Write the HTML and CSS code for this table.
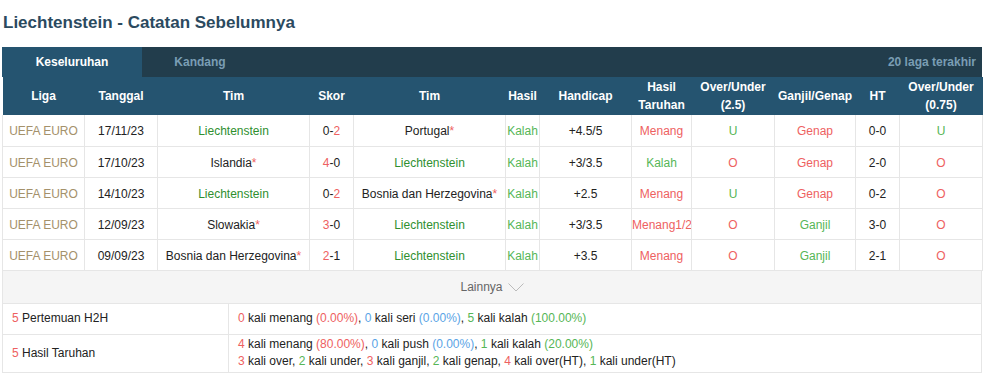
FILE: index.html
```html
<!DOCTYPE html>
<html lang="id">
<head>
<meta charset="utf-8">
<title>Liechtenstein - Catatan Sebelumnya</title>
<link rel="stylesheet" href="styles.css">
</head>
<body>
<div class="wrap">
  <h2 class="title">Liechtenstein - Catatan Sebelumnya</h2>
  <div class="tabs">
    <div class="tab active">Keseluruhan</div>
    <div class="tab">Kandang</div>
    <div class="tab-note">20 laga terakhir</div>
  </div>
  <table class="rec">
    <colgroup>
      <col style="width:82px"><col style="width:73px"><col style="width:152px"><col style="width:44px"><col style="width:152px"><col style="width:34px"><col style="width:92px"><col style="width:60px"><col style="width:83px"><col style="width:81px"><col style="width:44px"><col style="width:83px">
    </colgroup>
    <thead>
      <tr>
        <th>Liga</th><th>Tanggal</th><th>Tim</th><th>Skor</th><th>Tim</th><th>Hasil</th><th>Handicap</th><th>Hasil<br>Taruhan</th><th>Over/Under<br>(2.5)</th><th>Ganjil/Genap</th><th>HT</th><th>Over/Under<br>(0.75)</th>
      </tr>
    </thead>
    <tbody>
      <tr>
        <td class="lg">UEFA EURO</td><td>17/11/23</td><td class="me">Liechtenstein</td><td>0-<span class="r">2</span></td><td>Portugal<span class="r">*</span></td><td class="g">Kalah</td><td>+4.5/5</td><td class="r">Menang</td><td class="g">U</td><td class="r">Genap</td><td>0-0</td><td class="g">U</td>
      </tr>
      <tr>
        <td class="lg">UEFA EURO</td><td>17/10/23</td><td>Islandia<span class="r">*</span></td><td><span class="r">4</span>-0</td><td class="me">Liechtenstein</td><td class="g">Kalah</td><td>+3/3.5</td><td class="g">Kalah</td><td class="r">O</td><td class="r">Genap</td><td>2-0</td><td class="r">O</td>
      </tr>
      <tr>
        <td class="lg">UEFA EURO</td><td>14/10/23</td><td class="me">Liechtenstein</td><td>0-<span class="r">2</span></td><td>Bosnia dan Herzegovina<span class="r">*</span></td><td class="g">Kalah</td><td>+2.5</td><td class="r">Menang</td><td class="g">U</td><td class="r">Genap</td><td>0-2</td><td class="r">O</td>
      </tr>
      <tr>
        <td class="lg">UEFA EURO</td><td>12/09/23</td><td>Slowakia<span class="r">*</span></td><td><span class="r">3</span>-0</td><td class="me">Liechtenstein</td><td class="g">Kalah</td><td>+3/3.5</td><td class="r">Menang1/2</td><td class="r">O</td><td class="g">Ganjil</td><td>3-0</td><td class="r">O</td>
      </tr>
      <tr>
        <td class="lg">UEFA EURO</td><td>09/09/23</td><td>Bosnia dan Herzegovina<span class="r">*</span></td><td><span class="r">2</span>-1</td><td class="me">Liechtenstein</td><td class="g">Kalah</td><td>+3.5</td><td class="r">Menang</td><td class="r">O</td><td class="g">Ganjil</td><td>2-1</td><td class="r">O</td>
      </tr>
    </tbody>
  </table>
  <div class="more">Lainnya <svg class="chev" width="16" height="9" viewBox="0 0 16 9"><path d="M0.5 0.5 L8 8 L15.5 0.5" fill="none" stroke="#bbbbbb" stroke-width="1"/></svg></div>
  <table class="sum">
    <colgroup><col style="width:226px"><col></colgroup>
    <tr class="h2h">
      <td class="lab"><span class="r">5</span> Pertemuan H2H</td>
      <td><span class="r">0</span> kali menang <span class="r">(0.00%)</span>, <span class="b">0</span> kali seri <span class="b">(0.00%)</span>, <span class="g">5</span> kali kalah <span class="g">(100.00%)</span></td>
    </tr>
    <tr class="bet">
      <td class="lab"><span class="r">5</span> Hasil Taruhan</td>
      <td><div><span class="r">4</span> kali menang <span class="r">(80.00%)</span>, <span class="b">0</span> kali push <span class="b">(0.00%)</span>, <span class="g">1</span> kali kalah <span class="g">(20.00%)</span></div><div><span class="r">3</span> kali over, <span class="g">2</span> kali under, <span class="r">3</span> kali ganjil, <span class="g">2</span> kali genap, <span class="r">4</span> kali over(HT), <span class="g">1</span> kali under(HT)</div></td>
    </tr>
  </table>
</div>
</body>
</html>
```
FILE: styles.css
```css
html, body {
  margin: 0;
  padding: 0;
  background: #ffffff;
}
body {
  font-family: "Liberation Sans", Arial, sans-serif;
  font-size: 12px;
  color: #222222;
}
.wrap {
  width: 980px;
  padding: 0 3px 0 2px;
}
.title {
  margin: 0;
  padding: 13px 0 0 1px;
  height: 35px;
  box-sizing: border-box;
  font-size: 17px;
  font-weight: bold;
  color: #2b4a5f;
  line-height: 20px;
}
.tabs {
  display: flex;
  align-items: stretch;
  height: 30px;
  background: #223d4c;
  margin-top: 12px;
}
.tab {
  width: 116px;
  display: flex;
  align-items: center;
  justify-content: center;
  font-weight: bold;
  color: #7a9db4;
  font-size: 12px;
}
.tab.active {
  width: 140px;
  background: #255470;
  color: #ffffff;
}
.tab-note {
  margin-left: auto;
  padding-right: 6px;
  display: flex;
  align-items: center;
  font-weight: bold;
  color: #7a9db4;
}
table {
  border-collapse: collapse;
  table-layout: fixed;
  width: 980px;
}
.rec th {
  background: #255470;
  color: #ffffff;
  font-weight: bold;
  height: 38px;
  padding: 0;
  line-height: 18px;
  text-align: center;
  vertical-align: middle;
}
.rec td {
  height: 31px;
  padding: 2px 0 0;
  box-sizing: border-box;
  text-align: center;
  border: 1px solid #e6e6e6;
  white-space: nowrap;
  overflow: hidden;
  color: #222222;
}
.rec tr:first-child td {
  border-top: none;
}
.rec td.lg { color: #a4916b; }
.rec td.me { color: #2f8f2f; }
.r, .rec td.r { color: #ee6161; }
.g, .rec td.g { color: #56b656; }
.b { color: #5aa4e6; }
.more {
  height: 32px;
  background: #f5f5f5;
  border-left: 1px solid #e6e6e6;
  border-right: 1px solid #e6e6e6;
  box-sizing: border-box;
  display: flex;
  align-items: center;
  justify-content: center;
  gap: 5px;
  color: #666666;
}
.chev {
  display: block;
  margin-top: 1px;
}
.sum td {
  border: 1px solid #e6e6e6;
  padding: 0 0 0 9px;
  color: #222222;
  vertical-align: middle;
  line-height: 17px;
}
.sum .h2h td { height: 30px; }
.sum .bet td { height: 37px; }
.sum td .r { color: #ee6161; }
.sum td .g { color: #56b656; }
.sum td .b { color: #5aa4e6; }
```
